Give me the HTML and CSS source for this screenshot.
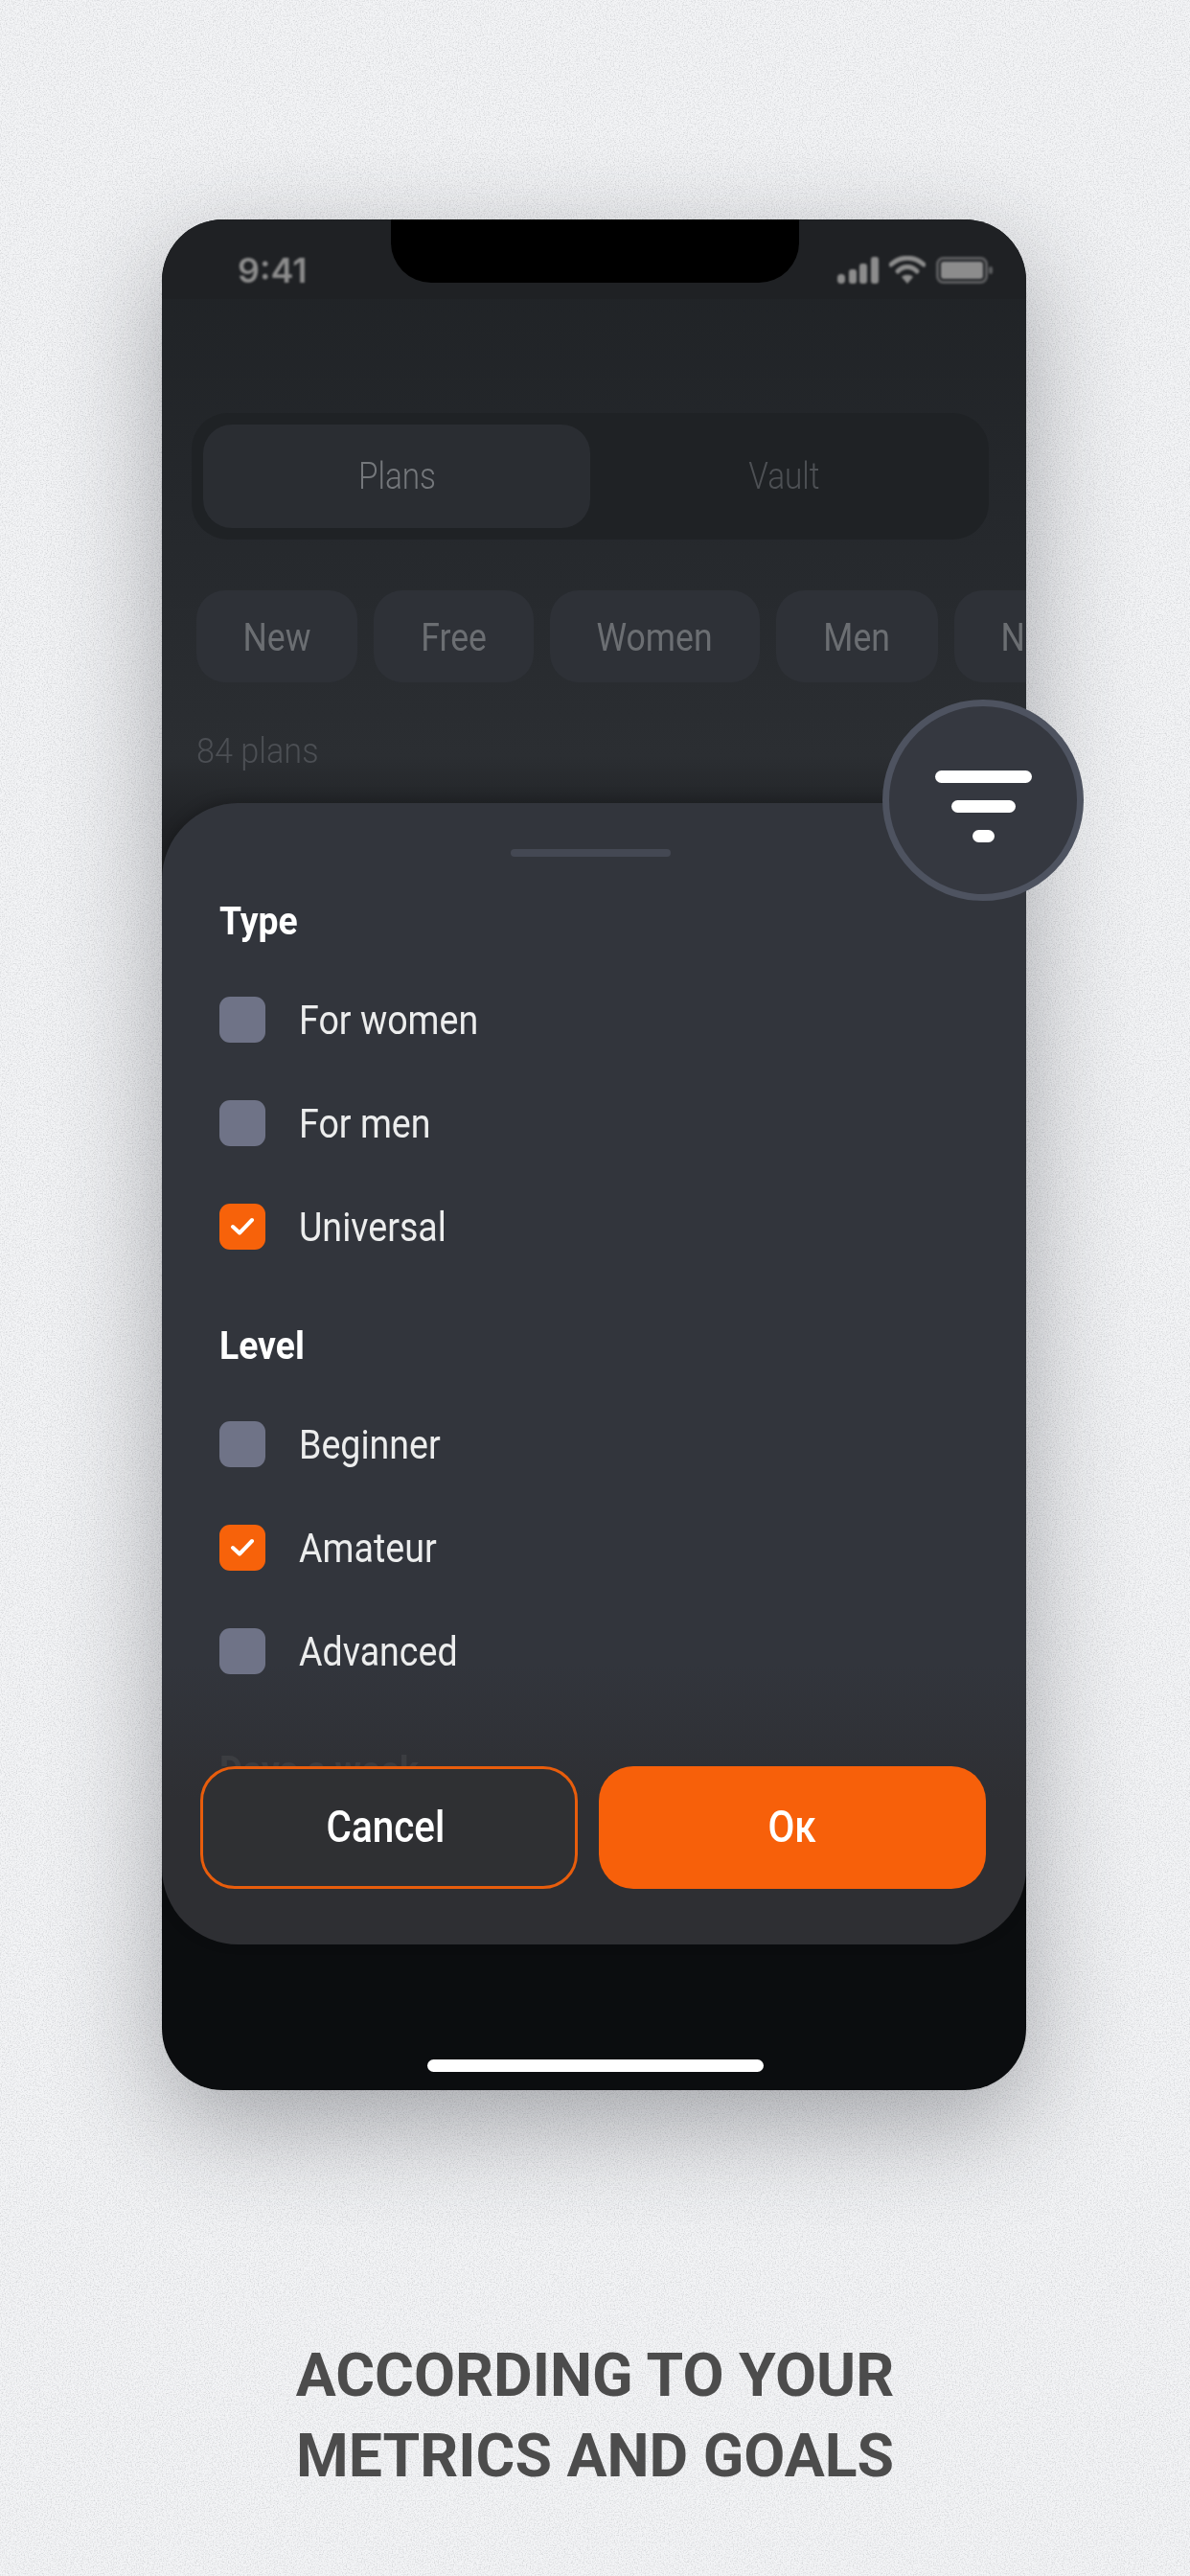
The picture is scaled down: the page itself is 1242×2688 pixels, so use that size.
FILE: index.html
```html
<!DOCTYPE html>
<html lang="en">
<head>
    <meta charset="UTF-8">
    <meta name="viewport" content="width=device-width, initial-scale=1.0">
    <title>According to your metrics and goals</title>
    <link rel="stylesheet" href="styles.css">
</head>
<body>

    <!-- paper grain behind everything -->
    <svg class="grain" width="1242" height="2688">
        <filter id="noise">
            <feTurbulence type="fractalNoise" baseFrequency="0.75" numOctaves="2" seed="4"/>
            <feColorMatrix type="matrix" values="0 0 0 0 0.6  0 0 0 0 0.61  0 0 0 0 0.63  1.7 0 0 0 -0.72"/>
        </filter>
        <rect width="1242" height="2688" filter="url(#noise)"/>
    </svg>

    <div class="stage">
        <div class="phone">
            <div class="notch"></div>

            <div class="status">
                <span class="time">9:41</span>
                <div class="status-icons">
                    <svg width="43" height="28" viewBox="0 0 43 28">
                        <rect x="0" y="18" width="8" height="10" rx="4"/>
                        <rect x="12" y="13" width="8" height="15" rx="3"/>
                        <rect x="23" y="7" width="8" height="21" rx="3"/>
                        <rect x="35" y="0" width="8" height="28" rx="3"/>
                    </svg>
                    <svg width="38" height="29" viewBox="0 0 38 29">
                        <path d="M2 9 C12 0 26 0 36 9" fill="none" stroke="#8c8c8c" stroke-width="5" stroke-linecap="round"/>
                        <path d="M9 16 C15 10 23 10 29 16" fill="none" stroke="#8c8c8c" stroke-width="5" stroke-linecap="round"/>
                        <path d="M13 22 C16 19 22 19 25 22 L19 29 Z"/>
                    </svg>
                    <svg width="60" height="28" viewBox="0 0 60 28">
                        <rect x="1.5" y="1.5" width="51" height="25" rx="6" fill="none" stroke="#5c5d5f" stroke-width="3"/>
                        <rect x="5" y="5" width="44" height="18" rx="3"/>
                        <rect x="55" y="10" width="4" height="8" rx="2" fill="#5c5d5f"/>
                    </svg>
                </div>
            </div>

            <div class="tabs">
                <div class="tab tab-active"><span class="tab-text">Plans</span></div>
                <div class="tab"><span class="tab-text">Vault</span></div>
            </div>

            <div class="chips">
                <div class="chip chip-new"><span class="chip-text">New</span></div>
                <div class="chip chip-free"><span class="chip-text">Free</span></div>
                <div class="chip chip-women"><span class="chip-text">Women</span></div>
                <div class="chip chip-men"><span class="chip-text">Men</span></div>
                <div class="chip chip-next"><span class="chip-text">New</span></div>
            </div>

            <p class="count">84 plans</p>

            <div class="sheet">
                <div class="handle"></div>

                <div class="options">
                    <h2 class="group-title">Type</h2>
                    <label class="option"><span class="box"></span><span class="option-text">For women</span></label>
                    <label class="option"><span class="box"></span><span class="option-text">For men</span></label>
                    <label class="option">
                        <span class="box box-on">
                            <svg width="26" height="20" viewBox="0 0 26 20"><path d="M3 10 L10 16.5 L23 3" fill="none" stroke="#fff" stroke-width="4" stroke-linecap="round" stroke-linejoin="round"/></svg>
                        </span>
                        <span class="option-text">Universal</span>
                    </label>

                    <h2 class="group-title group-next">Level</h2>
                    <label class="option"><span class="box"></span><span class="option-text">Beginner</span></label>
                    <label class="option">
                        <span class="box box-on">
                            <svg width="26" height="20" viewBox="0 0 26 20"><path d="M3 10 L10 16.5 L23 3" fill="none" stroke="#fff" stroke-width="4" stroke-linecap="round" stroke-linejoin="round"/></svg>
                        </span>
                        <span class="option-text">Amateur</span>
                    </label>
                    <label class="option"><span class="box"></span><span class="option-text">Advanced</span></label>

                    <h2 class="group-title group-faded">Days a week</h2>
                </div>

                <div class="actions">
                    <button class="btn btn-cancel"><span class="btn-text">Cancel</span></button>
                    <button class="btn btn-ok"><span class="btn-text">Oк</span></button>
                </div>
            </div>

            <div class="home-bar"></div>
        </div>

        <div class="filter-badge">
            <span class="bar bar-long"></span>
            <span class="bar bar-mid"></span>
            <span class="bar bar-short"></span>
        </div>
    </div>

    <h1 class="caption">ACCORDING TO YOUR<br>METRICS AND GOALS</h1>

</body>
</html>
```

FILE: styles.css
```css
* {
    box-sizing: border-box;
}

body {
    margin: 0;
    width: 1242px;
    height: 2688px;
    overflow: hidden;
    position: relative;
    background-color: #f3f4f6;
    font-family: 'Roboto', 'Liberation Sans', sans-serif;
}

.grain {
    position: absolute;
    left: 0;
    top: 0;
}

.stage {
    position: relative;
    width: 902px;
    height: 1952px;
    margin: 229px 0 0 169px;
}

.phone {
    position: relative;
    width: 902px;
    height: 1952px;
    border-radius: 64px;
    overflow: hidden;
    background: linear-gradient(#1f2225 0, #25282c 300px, #2b2e32 560px, #1f2124 640px, #0b0d0f 1000px);
}

.stage::before {
    content: "";
    position: absolute;
    inset: 0;
    border-radius: 64px;
    box-shadow: 0 36px 110px rgba(40, 42, 50, 0.38);
}

.notch {
    position: absolute;
    left: 239px;
    top: 0;
    width: 426px;
    height: 66px;
    background-color: #000;
    border-radius: 0 0 42px 42px;
}

.status {
    display: flex;
    justify-content: space-between;
    align-items: center;
    height: 83px;
    padding: 22px 34px 0 79px;
    background-color: #1f2124;
}

.time {
    font-family: 'Inter', 'Liberation Sans', sans-serif;
    font-size: 36px;
    font-weight: 600;
    color: #8c8c8c;
    filter: blur(0.8px);
}

.status-icons {
    display: flex;
    align-items: center;
    gap: 11px;
    fill: #8c8c8c;
    filter: blur(0.8px);
}

.tabs {
    display: flex;
    width: 832px;
    height: 132px;
    margin: 119px 0 0 31px;
    padding: 12px;
    border-radius: 38px;
    background-color: #1f2225;
}

.tab {
    width: 404px;
    height: 108px;
    display: flex;
    justify-content: center;
    align-items: center;
    font-size: 39px;
    font-weight: 300;
    color: #4d5054;
    border-radius: 30px;
}

.tab-text {
    display: inline-block;
    transform: scaleX(0.855);
}

.tab-active {
    background-color: #2a2d32;
    color: #74777b;
}

.chips {
    display: flex;
    gap: 17px;
    margin: 53px 0 0 36px;
}

.chip {
    flex: none;
    height: 96px;
    display: flex;
    justify-content: center;
    align-items: center;
    padding-top: 2px;
    font-size: 40px;
    color: #6b6e72;
    background-color: #2e3137;
    border-radius: 30px;
    overflow: hidden;
}

.chip-text {
    display: inline-block;
    transform: scaleX(0.89);
}

.chip-new { width: 168px; }
.chip-free { width: 167px; }
.chip-women { width: 219px; }
.chip-men { width: 169px; }
.chip-next { width: 168px; }

.count {
    margin: 50px 0 0 36px;
    font-size: 37px;
    line-height: 44px;
    font-weight: 300;
    color: #4c4f54;
    transform: scaleX(0.925);
    transform-origin: left;
}

.sheet {
    position: absolute;
    left: 0;
    top: 609px;
    width: 902px;
    height: 1191px;
    border-radius: 80px;
    background: linear-gradient(#32353c 0, #32353c 900px, #2e2f33 1040px);
    box-shadow: 0 -3px 14px rgba(0, 0, 0, 0.22);
    overflow: hidden;
}

.handle {
    width: 167px;
    height: 8px;
    margin: 48px 0 0 364px;
    border-radius: 4px;
    background-color: #444853;
}

.options {
    height: 949px;
    padding: 0 0 0 60px;
    overflow: hidden;
}

.group-title {
    margin: 43px 0 0;
    font-size: 41px;
    line-height: 48px;
    font-weight: 700;
    color: #fff;
    transform: scaleX(0.91);
    transform-origin: left;
}

.group-next {
    margin-top: 76px;
}

.group-faded {
    margin-top: 76px;
    color: rgba(255, 255, 255, 0.06);
}

.option {
    display: flex;
    align-items: center;
    gap: 35px;
    height: 48px;
    margin-top: 60px;
}

.group-title + .option {
    margin-top: 55px;
}

.box {
    flex: none;
    width: 48px;
    height: 48px;
    display: flex;
    justify-content: center;
    align-items: center;
    border-radius: 11px;
    background-color: #6f7387;
}

.box-on {
    background-color: #f7620a;
}

.option-text {
    display: inline-block;
    font-size: 42px;
    font-weight: 400;
    color: #eceded;
    transform: scaleX(0.895);
    transform-origin: left;
}

.actions {
    display: flex;
    gap: 22px;
    padding: 0 42px 0 40px;
}

.btn {
    height: 128px;
    padding-bottom: 3px;
    border-radius: 36px;
    font-family: inherit;
    font-size: 46px;
    font-weight: 500;
    color: #fff;
}

.btn-text {
    display: inline-block;
    transform: scaleX(0.88);
}

.btn-cancel {
    width: 394px;
    padding-right: 14px;
    background-color: #2f3033;
    border: 3px solid #e85d0c;
}

.btn-ok {
    width: 404px;
    background-color: #f7600a;
    border: none;
}

.home-bar {
    position: absolute;
    left: 277px;
    top: 1920px;
    width: 351px;
    height: 13px;
    border-radius: 7px;
    background-color: #fff;
}

.filter-badge {
    position: absolute;
    left: 752px;
    top: 501px;
    width: 210px;
    height: 210px;
    display: flex;
    flex-direction: column;
    align-items: center;
    gap: 18px;
    padding-top: 67px;
    border-radius: 50%;
    background-color: #353840;
    border: 7px solid #4e5360;
}

.bar {
    height: 13px;
    border-radius: 7px;
    background-color: #fff;
}

.bar-long { width: 101px; }
.bar-mid { width: 67px; }
.bar-short { width: 23px; }

.caption {
    position: relative;
    margin: 256px 0 0;
    text-align: center;
    font-size: 62.5px;
    line-height: 84px;
    font-weight: 700;
    color: #4c4c4c;
}
```
